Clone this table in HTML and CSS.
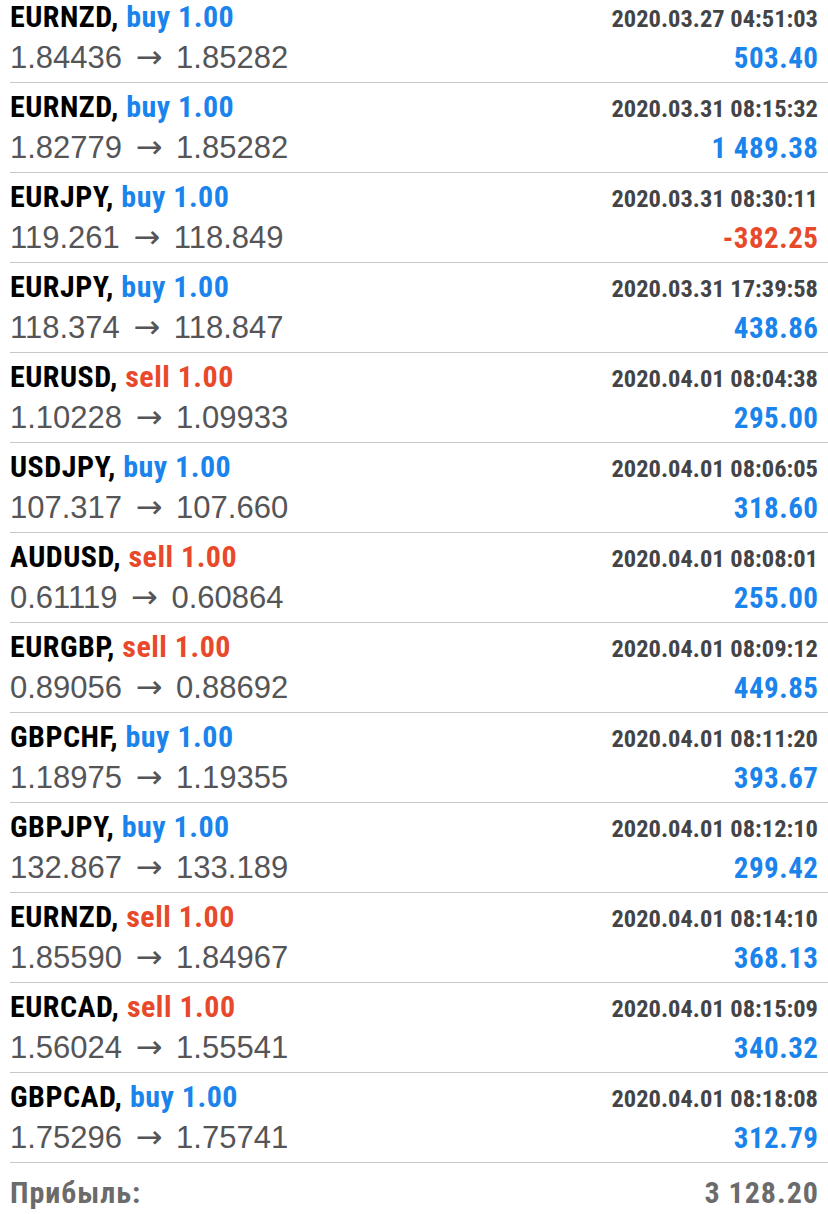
FILE: index.html
```html
<!DOCTYPE html>
<html lang="ru">
<head>
<meta charset="utf-8">
<link rel="stylesheet" href="styles.css">
</head>
<body>
<div class="list">
  <div class="row">
    <div class="line top"><span class="title">EURNZD, <span class="buy">buy 1.00</span></span><span class="date">2020.03.27 04:51:03</span></div>
    <div class="line bottom"><span class="prices">1.84436 <span class="arrow">→</span> 1.85282</span><span class="amount pos">503.40</span></div>
  </div>
  <div class="row">
    <div class="line top"><span class="title">EURNZD, <span class="buy">buy 1.00</span></span><span class="date">2020.03.31 08:15:32</span></div>
    <div class="line bottom"><span class="prices">1.82779 <span class="arrow">→</span> 1.85282</span><span class="amount pos">1 489.38</span></div>
  </div>
  <div class="row">
    <div class="line top"><span class="title">EURJPY, <span class="buy">buy 1.00</span></span><span class="date">2020.03.31 08:30:11</span></div>
    <div class="line bottom"><span class="prices">119.261 <span class="arrow">→</span> 118.849</span><span class="amount neg">-382.25</span></div>
  </div>
  <div class="row">
    <div class="line top"><span class="title">EURJPY, <span class="buy">buy 1.00</span></span><span class="date">2020.03.31 17:39:58</span></div>
    <div class="line bottom"><span class="prices">118.374 <span class="arrow">→</span> 118.847</span><span class="amount pos">438.86</span></div>
  </div>
  <div class="row">
    <div class="line top"><span class="title">EURUSD, <span class="sell">sell 1.00</span></span><span class="date">2020.04.01 08:04:38</span></div>
    <div class="line bottom"><span class="prices">1.10228 <span class="arrow">→</span> 1.09933</span><span class="amount pos">295.00</span></div>
  </div>
  <div class="row">
    <div class="line top"><span class="title">USDJPY, <span class="buy">buy 1.00</span></span><span class="date">2020.04.01 08:06:05</span></div>
    <div class="line bottom"><span class="prices">107.317 <span class="arrow">→</span> 107.660</span><span class="amount pos">318.60</span></div>
  </div>
  <div class="row">
    <div class="line top"><span class="title">AUDUSD, <span class="sell">sell 1.00</span></span><span class="date">2020.04.01 08:08:01</span></div>
    <div class="line bottom"><span class="prices">0.61119 <span class="arrow">→</span> 0.60864</span><span class="amount pos">255.00</span></div>
  </div>
  <div class="row">
    <div class="line top"><span class="title">EURGBP, <span class="sell">sell 1.00</span></span><span class="date">2020.04.01 08:09:12</span></div>
    <div class="line bottom"><span class="prices">0.89056 <span class="arrow">→</span> 0.88692</span><span class="amount pos">449.85</span></div>
  </div>
  <div class="row">
    <div class="line top"><span class="title">GBPCHF, <span class="buy">buy 1.00</span></span><span class="date">2020.04.01 08:11:20</span></div>
    <div class="line bottom"><span class="prices">1.18975 <span class="arrow">→</span> 1.19355</span><span class="amount pos">393.67</span></div>
  </div>
  <div class="row">
    <div class="line top"><span class="title">GBPJPY, <span class="buy">buy 1.00</span></span><span class="date">2020.04.01 08:12:10</span></div>
    <div class="line bottom"><span class="prices">132.867 <span class="arrow">→</span> 133.189</span><span class="amount pos">299.42</span></div>
  </div>
  <div class="row">
    <div class="line top"><span class="title">EURNZD, <span class="sell">sell 1.00</span></span><span class="date">2020.04.01 08:14:10</span></div>
    <div class="line bottom"><span class="prices">1.85590 <span class="arrow">→</span> 1.84967</span><span class="amount pos">368.13</span></div>
  </div>
  <div class="row">
    <div class="line top"><span class="title">EURCAD, <span class="sell">sell 1.00</span></span><span class="date">2020.04.01 08:15:09</span></div>
    <div class="line bottom"><span class="prices">1.56024 <span class="arrow">→</span> 1.55541</span><span class="amount pos">340.32</span></div>
  </div>
  <div class="row">
    <div class="line top"><span class="title">GBPCAD, <span class="buy">buy 1.00</span></span><span class="date">2020.04.01 08:18:08</span></div>
    <div class="line bottom"><span class="prices">1.75296 <span class="arrow">→</span> 1.75741</span><span class="amount pos">312.79</span></div>
  </div>
  <div class="total">
    <span class="total-label">Прибыль:</span><span class="total-value">3 128.20</span>
  </div>
</div>
</body>
</html>
```
FILE: styles.css
```css
html, body {
  margin: 0;
  padding: 0;
  background: #ffffff;
}

body {
  width: 828px;
  height: 1214px;
  overflow: hidden;
}

.list {
  margin-top: -7px;
  padding-left: 10px;
}

.row {
  height: 89px;
  border-bottom: 1px solid #c8c8c8;
  display: flex;
  flex-direction: column;
}

.line {
  display: flex;
  justify-content: space-between;
  align-items: baseline;
  padding-right: 10px;
  white-space: nowrap;
  line-height: 40px;
}

.line.top {
  height: 40px;
  padding-top: 4px;
}

.line.bottom {
  height: 40px;
}

.title,
.date,
.amount,
.total {
  font-family: "Roboto", "Liberation Sans", sans-serif;
  font-weight: 700;
  font-stretch: 75%;
}

.title {
  font-size: 30px;
  letter-spacing: 0.5px;
  color: #000000;
}

.buy {
  color: #1a84ec;
}

.sell {
  color: #e8492b;
}

.date {
  font-size: 24.5px;
  color: #444446;
}

.prices {
  font-family: "Liberation Sans", Arial, sans-serif;
  font-size: 31px;
  color: #555557;
}

.arrow {
  font-family: "DejaVu Sans", sans-serif;
  font-size: 32px;
  margin: 0 5px;
}

.amount {
  font-size: 29px;
  letter-spacing: 0.5px;
  margin-right: -0.5px;
}

.pos {
  color: #1a84ec;
}

.neg {
  color: #e8492b;
}

.total {
  display: flex;
  justify-content: space-between;
  align-items: baseline;
  padding-right: 10px;
  padding-top: 10px;
  line-height: 40px;
  font-size: 30px;
  letter-spacing: 1px;
  color: #6b6b6b;
}

.total-value {
  margin-right: -1px;
}
```
